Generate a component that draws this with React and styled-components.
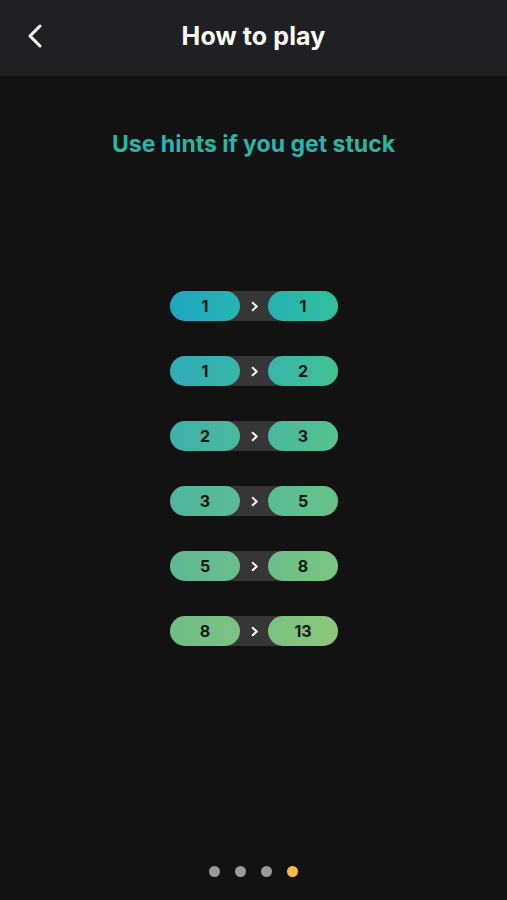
import React from "react";
import styled, { createGlobalStyle } from "styled-components";

const GlobalStyle = createGlobalStyle`
  html, body {
    margin: 0;
    padding: 0;
    background: #121212;
  }
  * {
    box-sizing: border-box;
  }
`;

const Page = styled.div`
  min-height: 100vh;
  display: flex;
  flex-direction: column;
  background: #121212;
  font-family: Inter, "Noto Sans", "Liberation Sans", sans-serif;
`;

const Header = styled.div`
  height: 76px;
  flex-shrink: 0;
  background: #1f2023;
  display: flex;
  align-items: center;
  justify-content: center;
  position: relative;
`;

const BackButton = styled.button`
  position: absolute;
  left: 22px;
  top: 22px;
  width: 28px;
  height: 28px;
  padding: 0;
  border: none;
  background: transparent;
  display: flex;
  align-items: center;
  justify-content: center;
  cursor: pointer;
`;

const Title = styled.h1`
  margin: 0;
  margin-top: -4px;
  color: #ffffff;
  font-size: 25px;
  font-weight: 700;
  letter-spacing: 0.1px;
`;

const Subtitle = styled.h2`
  margin: 54px 0 0;
  text-align: center;
  color: #2cb4aa;
  font-size: 23px;
  line-height: 28px;
  font-weight: 700;
`;

const Sequence = styled.div`
  margin-top: 133px;
  display: flex;
  flex-direction: column;
  align-items: center;
  gap: 35px;
`;

const Row = styled.div`
  width: 168px;
  height: 30px;
  border-radius: 15px;
  background: #363636;
  display: flex;
  align-items: center;
  justify-content: space-between;
  margin-left: 1px;
`;

const Pill = styled.div`
  width: 70px;
  height: 30px;
  border-radius: 15px;
  background: linear-gradient(90deg, ${(p) => p.$from}, ${(p) => p.$to});
  display: flex;
  align-items: center;
  justify-content: center;
  color: #151515;
  font-size: 16px;
  font-weight: 700;
`;

const Arrow = styled.span`
  display: flex;
  align-items: center;
  justify-content: center;
  width: 28px;
`;

const Dots = styled.div`
  margin-top: auto;
  padding-bottom: 23px;
  display: flex;
  justify-content: center;
  gap: 14.7px;
`;

const Dot = styled.span`
  width: 11px;
  height: 11px;
  border-radius: 50%;
  background: ${(p) => (p.$active ? "#f6bb43" : "#9b9b9b")};
`;

const hex = (c) => [1, 3, 5].map((i) => parseInt(c.slice(i, i + 2), 16));
const mix = (a, b, t) => {
  const x = hex(a);
  const y = hex(b);
  return (
    "#" +
    x
      .map((v, i) => Math.round(v + (y[i] - v) * t).toString(16).padStart(2, "0"))
      .join("")
  );
};

const startTop = "#1fa6c4";
const startBottom = "#6dbd88";
const endTop = "#2fc09b";
const endBottom = "#8dc67a";

const pairs = [
  [1, 1],
  [1, 2],
  [2, 3],
  [3, 5],
  [5, 8],
  [8, 13],
];

function Chevron() {
  return (
    <svg width="11" height="11" viewBox="0 0 12 12">
      <path d="M4 2 L8.5 6 L4 10" fill="none" stroke="#ffffff" strokeWidth="2.2" strokeLinecap="round" strokeLinejoin="round" />
    </svg>
  );
}

function App() {
  return (
    <Page>
      <GlobalStyle />
      <Header>
        <BackButton aria-label="Back">
          <svg width="22" height="26" viewBox="0 0 22 26">
            <path d="M15 3 L5 13 L15 23" fill="none" stroke="#ffffff" strokeWidth="3" strokeLinecap="round" strokeLinejoin="round" />
          </svg>
        </BackButton>
        <Title>How to play</Title>
      </Header>

      <Subtitle>Use hints if you get stuck</Subtitle>

      <Sequence>
        {pairs.map(([a, b], r) => {
          const t = r / (pairs.length - 1);
          const s = mix(startTop, startBottom, t);
          const e = mix(endTop, endBottom, t);
          return (
            <Row key={r}>
              <Pill $from={s} $to={mix(s, e, 0.5)}>{a}</Pill>
              <Arrow>
                <Chevron />
              </Arrow>
              <Pill $from={mix(s, e, 0.45)} $to={e}>{b}</Pill>
            </Row>
          );
        })}
      </Sequence>

      <Dots>
        <Dot />
        <Dot />
        <Dot />
        <Dot $active />
      </Dots>
    </Page>
  );
}

export default App;
